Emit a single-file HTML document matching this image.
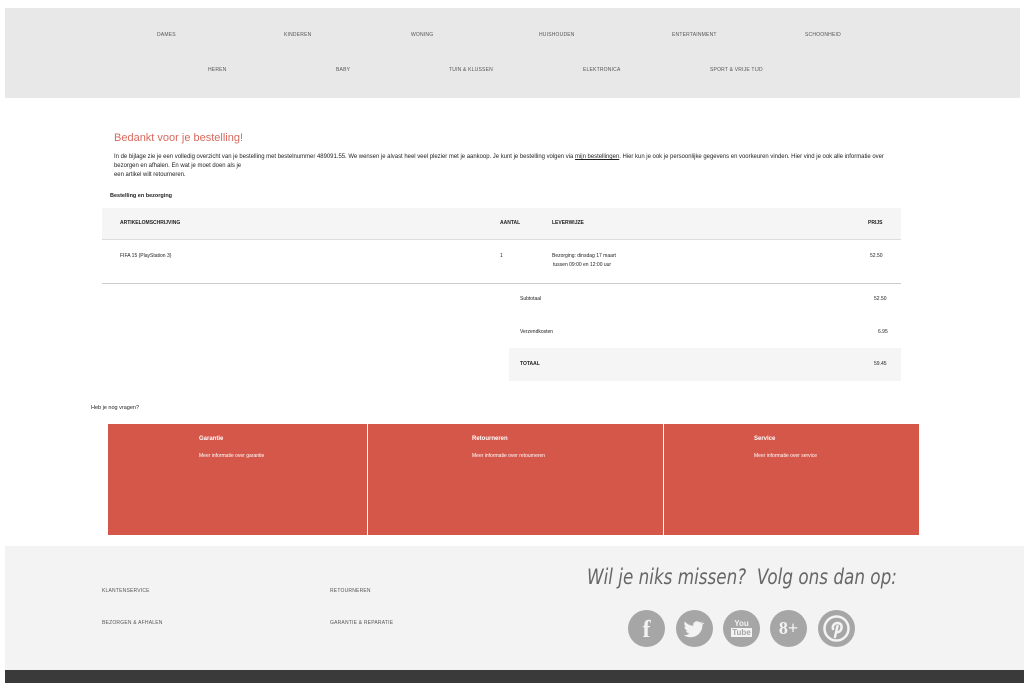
<!DOCTYPE html>
<html><head><meta charset="utf-8"><style>
*{margin:0;padding:0;box-sizing:border-box}
body{width:1024px;height:683px;background:#fff;position:relative;overflow:hidden;font-family:"Liberation Sans",Arial,sans-serif;color:#222}
.a{position:absolute;white-space:nowrap}
.nav{position:absolute;left:5px;top:8px;width:1015px;height:90px;background:#e8e8e8}
.n{position:absolute;font-size:5px;color:#555;letter-spacing:.2px}
.t{font-size:5px;color:#222}
.p{font-size:5.95px;color:#222}
.b{font-weight:bold}
.red{position:absolute;top:424px;height:111px;background:#d5574a}
.red .h{position:absolute;font-size:6px;color:#fff;font-weight:bold}
.red .s{position:absolute;font-size:5px;color:#fff}
.ic{position:absolute;top:610px;width:37px;height:37px;border-radius:50%;background:#a6a6a6;color:#f3f3f3;font-weight:bold;text-align:center}
</style></head><body>
<div class="nav">
<span class="n" style="left:152px;top:24px">DAMES</span>
<span class="n" style="left:279px;top:24px">KINDEREN</span>
<span class="n" style="left:406px;top:24px">WONING</span>
<span class="n" style="left:534px;top:24px">HUISHOUDEN</span>
<span class="n" style="left:667px;top:24px">ENTERTAINMENT</span>
<span class="n" style="left:800px;top:24px">SCHOONHEID</span>
<span class="n" style="left:203px;top:59px">HEREN</span>
<span class="n" style="left:331px;top:59px">BABY</span>
<span class="n" style="left:444px;top:59px">TUIN &amp; KLUSSEN</span>
<span class="n" style="left:578px;top:59px">ELEKTRONICA</span>
<span class="n" style="left:705px;top:59px">SPORT &amp; VRIJE TIJD</span>
</div>
<div class="a" style="left:114px;top:132px;font-size:11px;color:#d86a5e">Bedankt voor je bestelling!</div>
<div class="a p" style="left:114px;top:154px">In de bijlage zie je een volledig overzicht van je bestelling met bestelnummer 489091.55. We wensen je alvast heel veel plezier met je aankoop. Je kunt je bestelling volgen via <u>mijn bestellingen</u>. Hier kun je ook je persoonlijke gegevens en voorkeuren vinden. Hier vind je ook alle informatie over</div>
<div class="a p" style="left:114px;top:163px">bezorgen en afhalen. En wat je moet doen als je</div>
<div class="a p" style="left:114px;top:172px">een artikel wilt retourneren.</div>
<div class="a t b" style="left:110px;top:193px;font-size:5.5px">Bestelling en bezorging</div>
<div class="a" style="left:102px;top:208px;width:799px;height:32px;background:#f5f5f5;border-bottom:1px solid #ddd"></div>
<div class="a t b" style="left:120px;top:220px">ARTIKELOMSCHRIJVING</div>
<div class="a t b" style="left:500px;top:220px">AANTAL</div>
<div class="a t b" style="left:552px;top:220px">LEVERWIJZE</div>
<div class="a t b" style="left:868px;top:220px">PRIJS</div>
<div class="a t" style="left:120px;top:253px">FIFA 15 (PlayStation 3)</div>
<div class="a t" style="left:500px;top:253px">1</div>
<div class="a t" style="left:552px;top:253px">Bezorging: dinsdag 17 maart</div>
<div class="a t" style="left:553px;top:262px">tussen 09:00 en 12:00 uur</div>
<div class="a t" style="left:870px;top:253px">52.50</div>
<div class="a" style="left:102px;top:283px;width:799px;height:1px;background:#ccc"></div>
<div class="a t" style="left:520px;top:296px">Subtotaal</div>
<div class="a t" style="left:874px;top:296px">52.50</div>
<div class="a t" style="left:520px;top:329px">Verzendkosten</div>
<div class="a t" style="left:878px;top:329px">6.95</div>
<div class="a" style="left:509px;top:348px;width:392px;height:33px;background:#f5f5f5"></div>
<div class="a t b" style="left:520px;top:361px">TOTAAL</div>
<div class="a t" style="left:874px;top:361px">59.45</div>
<div class="a t" style="left:91px;top:405px;font-size:5.5px">Heb je nog vragen?</div>
<div class="red" style="left:108px;width:259px"><span class="h" style="left:91px;top:12px">Garantie</span><span class="s" style="left:91px;top:29px">Meer informatie over garantie</span></div>
<div class="red" style="left:368px;width:295px"><span class="h" style="left:104px;top:12px">Retourneren</span><span class="s" style="left:104px;top:29px">Meer informatie over retourneren</span></div>
<div class="red" style="left:664px;width:255px"><span class="h" style="left:90px;top:12px">Service</span><span class="s" style="left:90px;top:29px">Meer informatie over service</span></div>
<div class="a" style="left:5px;top:546px;width:1019px;height:124px;background:#f3f3f3"></div>
<div class="a n" style="left:102px;top:588px">KLANTENSERVICE</div>
<div class="a n" style="left:330px;top:588px">RETOURNEREN</div>
<div class="a n" style="left:102px;top:620px">BEZORGEN &amp; AFHALEN</div>
<div class="a n" style="left:330px;top:620px">GARANTIE &amp; REPARATIE</div>
<div class="a" style="left:587px;top:565px;font-size:21px;color:#666;font-family:'DejaVu Sans',sans-serif;font-style:italic;transform:scaleX(0.8);transform-origin:0 0">Wil je niks missen?&nbsp; Volg ons dan op:</div>
<div class="ic" style="left:628px;font-size:24px;line-height:40px;font-family:'Liberation Serif',serif">f</div>
<div class="ic" style="left:676px"><svg width="37" height="37" viewBox="0 0 37 37"><path d="M27 13c-1 .5-1.6.6-2.4.7.9-.5 1.4-1.3 1.7-2.2-.8.5-1.7.8-2.6 1-2.6-2.7-7.2-.5-6.4 3.3-3.5-.2-6.4-1.8-8.4-4.3-1.1 1.9-.5 4.3 1.2 5.5-.6 0-1.2-.2-1.7-.5 0 2 1.4 3.6 3.3 4-.6.2-1.2.2-1.8.1.5 1.6 2 2.8 3.8 2.8-1.7 1.4-4 2-6 1.8 8.7 5.3 19-.5 18.7-10.5.8-.6 1.4-1.2 1.9-2z" fill="#f3f3f3"/></svg></div>
<div class="ic" style="left:723px;font-size:8px;line-height:9px;padding-top:9px">You<br><span style="background:#f3f3f3;color:#a6a6a6;padding:0 1px">Tube</span></div>
<div class="ic" style="left:770px;font-size:18px;line-height:37px;font-family:'Liberation Serif',serif">8+</div>
<div class="ic" style="left:818px"><svg width="37" height="37" viewBox="0 0 37 37"><circle cx="18.5" cy="18.5" r="12" fill="none" stroke="#f3f3f3" stroke-width="2.5"/><path d="M17 27l2.5-11M15 19c-1-4 2-6 4.5-6 3 0 4.5 2 4 5s-2.5 4.5-4.5 4" fill="none" stroke="#f3f3f3" stroke-width="2.5" stroke-linecap="round"/></svg></div>
<div class="a" style="left:5px;top:670px;width:1019px;height:13px;background:#3a3a3a"></div>
</body></html>
